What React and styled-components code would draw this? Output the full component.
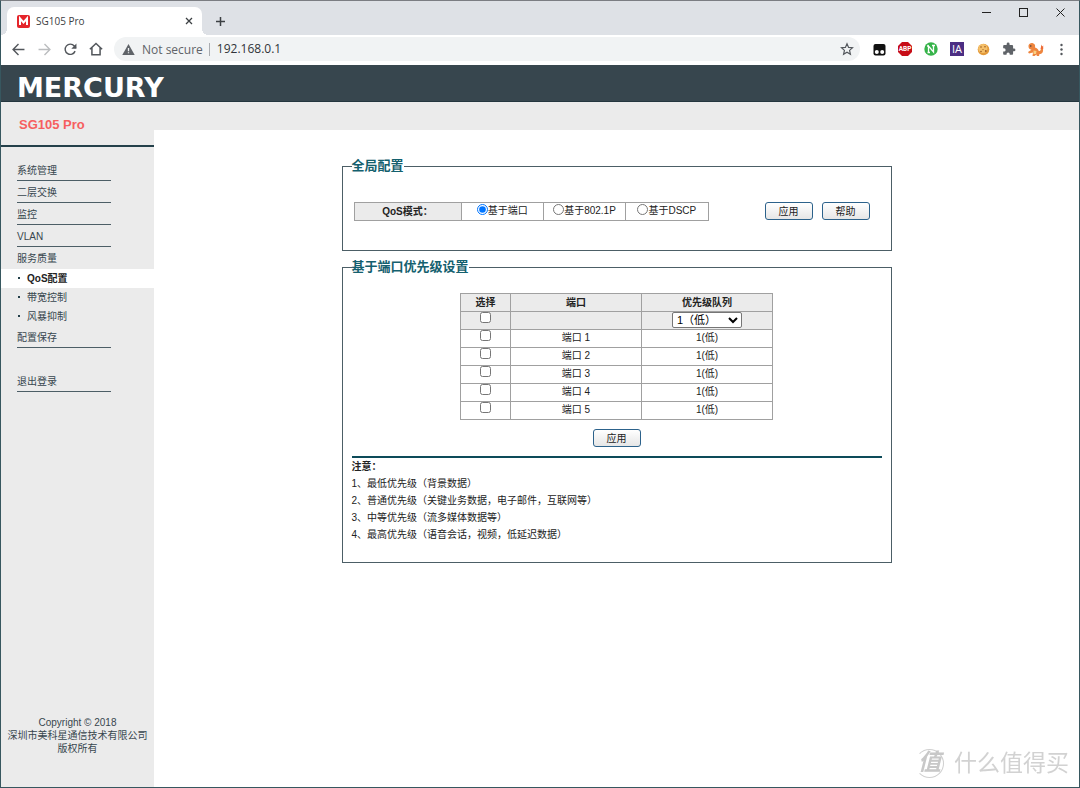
import React from "react";
import styled, { createGlobalStyle, css } from "styled-components";

const GlobalStyle = createGlobalStyle`
  * {
    box-sizing: border-box;
  }

  body {
    margin: 0;
    background: #fff;
    color: #222;
    font-family: "Liberation Sans", "Noto Sans CJK SC", sans-serif;
    font-size: 10px;
    line-height: 14px;
  }

  button,
  input,
  select {
    margin: 0;
    padding: 0;
    font: inherit;
    color: inherit;
  }
`;

/* ---------- browser window ---------- */

const Window = styled.div`
  display: flex;
  flex-direction: column;
  min-height: 100vh;
  border: 1px solid #37575f;
  border-top-color: #7b7d82;
`;

const TabStrip = styled.header`
  display: flex;
  align-items: flex-end;
  height: 34px;
  padding-left: 6px;
  background: #dee1e6;
  font-family: "Open Sans", sans-serif;
`;

const Tab = styled.div`
  position: relative;
  display: flex;
  align-items: center;
  width: 195px;
  height: 28px;
  padding: 0 8px 0 10px;
  border-radius: 7px 7px 0 0;
  background: #fff;
  color: #3c4043;

  & span {
    flex: 1;
    margin-left: 6px;
  }

  &::before,
  &::after {
    content: "";
    position: absolute;
    bottom: 0;
    width: 6px;
    height: 6px;
  }

  &::before {
    left: -6px;
    background: radial-gradient(circle at 0 0, transparent 6px, #fff 6px);
  }

  &::after {
    right: -6px;
    background: radial-gradient(circle at 100% 0, transparent 6px, #fff 6px);
  }
`;

const IconButton = styled.button`
  display: flex;
  align-items: center;
  justify-content: center;
  flex: none;
  width: ${({ $width }) => $width || 26}px;
  height: ${({ $height }) => $height || 26}px;
  border: 0;
  background: none;
`;

const NewTab = styled(IconButton)`
  margin-left: 5px;
`;

const WindowControls = styled.div`
  display: flex;
  align-self: flex-start;
  margin-left: auto;
`;

const Toolbar = styled.nav`
  display: flex;
  align-items: center;
  height: 30px;
  padding: 0 5px 2px 4px;
  background: #fff;
  font-family: "Open Sans", sans-serif;
  font-size: 12px;
`;

const AddressBar = styled.div`
  display: flex;
  flex: 1;
  align-items: center;
  height: 24px;
  margin: 0 6px 0 5px;
  padding: 0 0 0 8px;
  border-radius: 12px;
  background: #f1f3f4;
`;

const Security = styled.button`
  display: flex;
  align-items: center;
  gap: 7px;
  padding-right: 6px;
  border: 0;
  border-right: 1px solid #a9acb0;
  background: none;
  color: #5f6368;
  line-height: 13px;
`;

const Address = styled.input`
  flex: 1;
  min-width: 0;
  margin-left: 7px;
  border: 0;
  outline: 0;
  background: none;
  color: #303338;
`;

/* ---------- switch web page ---------- */

const Masthead = styled.header`
  display: flex;
  align-items: center;
  height: 37px;
  padding: 10px 0 0 16px;
  border-bottom: 1px solid #24363e;
  background: #37464e;
`;

const Logo = styled.h1`
  margin: 0;
  color: #fff;
  font: bold 27px/26px "DejaVu Sans", sans-serif;
`;

const Page = styled.div`
  display: flex;
  flex: 1;
`;

const Sidebar = styled.aside`
  display: flex;
  flex-direction: column;
  flex: none;
  width: 153px;
  background: #ebebeb;
  color: #37464e;
`;

const Model = styled.h2`
  margin: 0 0 12px;
  padding: 15px 0 12px 18px;
  border-bottom: 2px solid #24404a;
  color: #f65f5f;
  font-size: 13px;
  line-height: 16px;
`;

const Menu = styled.ul`
  margin: 0;
  padding: 0;
  list-style: none;
`;

const MenuLink = styled.a`
  display: block;
  width: 94px;
  margin-left: 16px;
  padding: 5px 0 2px;
  border-bottom: 1px solid ${({ $open }) => ($open ? "transparent" : "#4c5e66")};
  color: inherit;
  text-decoration: none;
`;

const LogoutItem = styled.li`
  margin-top: 22px;
`;

const SubLink = styled.a`
  display: flex;
  align-items: center;
  height: 19px;
  padding: 1px 0 0 16px;
  color: inherit;
  text-decoration: none;

  &::before {
    content: "";
    width: 2px;
    height: 2px;
    margin: 0 7px 3px 1px;
    background: #24404a;
  }

  ${({ $active }) =>
    $active &&
    css`
      background: #fff;
      color: #222;
      font-weight: bold;
    `}
`;

const Copyright = styled.p`
  margin: auto 0 32px;
  text-align: center;
  line-height: 13px;
`;

const Main = styled.main`
  flex: 1;
  padding-bottom: 20px;

  &::before {
    content: "";
    display: block;
    height: 28px;
    background: #ebebeb;
  }
`;

const Panels = styled.div`
  display: flex;
  flex-direction: column;
  gap: 7px;
  width: 550px;
  margin: 27px auto 0;
`;

const Panel = styled.fieldset`
  min-width: 0;
  margin: 0;
  padding: ${({ $padding }) => $padding};
  border: 1px solid #4c5e66;
`;

const Legend = styled.legend`
  padding: 0;
  color: #14606e;
  font-size: 13px;
  font-weight: bold;
  line-height: 18px;
`;

const ModeRow = styled.div`
  display: flex;
  align-items: flex-start;
  gap: 9px;
  padding: 0 12px 0 2px;
`;

const Table = styled.table`
  border-collapse: collapse;
  text-align: center;

  & th,
  & td {
    height: 18px;
    padding: 0;
    border: 1px solid #a0a0a0;
  }

  & th {
    background: #ebebeb;
  }
`;

const ModeTable = styled(Table)`
  table-layout: fixed;
  width: 355px;
  margin-right: auto;
`;

const PortTable = styled(Table)`
  table-layout: fixed;
  width: 313px;
  margin: 0 auto;

  & td {
    padding-bottom: 1px;
  }
`;

const BatchRow = styled.tr`
  background: #ebebeb;
`;

const Option = styled.label`
  display: inline-flex;
  align-items: center;

  & input {
    width: 11px;
    height: 11px;
    margin-bottom: 3px;
  }
`;

const Tick = styled.input`
  display: block;
  width: 11px;
  height: 11px;
  margin: 0 auto 5px;
`;

const Queue = styled.select`
  display: block;
  width: 70px;
  height: 16px;
  margin: 0 auto;
  border: 1px solid #767676;
  border-radius: 2px;
  background: #fff;
  color: #000;
  font-size: 11px;
`;

const Button = styled.button`
  width: 48px;
  height: 18px;
  padding-top: 2px;
  border: 1px solid #2c628b;
  border-radius: 3px;
  background: linear-gradient(#fff, #e6e6e6);
  color: #222;
  line-height: 14px;
`;

const Actions = styled.div`
  display: flex;
  justify-content: center;
  padding: 9px 0;
`;

const Notes = styled.section`
  border-top: 2px solid #0d4b59;
  line-height: 17px;

  & h3,
  & p {
    margin: 0;
    font-size: 10px;
  }
`;

const Watermark = styled.div`
  position: fixed;
  right: 11px;
  bottom: 8px;
  display: flex;
  align-items: center;
  gap: 10px;
  color: #d2d2d2;
  font-size: 23px;
  line-height: 34px;
`;

const Seal = styled.span`
  width: 29px;
  height: 29px;
  border: 1px solid #cfcfcf;
  border-left-color: transparent;
  border-radius: 50%;
  color: #c8c8c8;
  text-align: center;
  font-style: italic;
  font-weight: bold;
  line-height: 25px;
`;

/* ---------- icons ---------- */

const Icon = ({ size = 14, box = 24, children, ...rest }) => (
  <svg width={size} height={size} viewBox={`0 0 ${box} ${box}`} fill="none" aria-hidden="true" {...rest}>
    {children}
  </svg>
);

const stroke = { stroke: "#53575c", strokeWidth: 2.6 };

const Favicon = () => (
  <Icon size={13} box={13}>
    <rect width="13" height="13" rx="2" fill="#e5252b" />
    <path d="M3 10V3.5L6.5 7.5L10 3.5V10" stroke="#fff" strokeWidth="2" />
  </Icon>
);

const extensions = [
  {
    name: "Tampermonkey",
    icon: (
      <Icon size={13} box={13}>
        <rect x="0.5" y="1" width="12" height="11.5" rx="2" fill="#111" />
        <circle cx="3.8" cy="9" r="2" fill="#fff" />
        <circle cx="9.2" cy="9" r="2" fill="#fff" />
      </Icon>
    ),
  },
  {
    name: "Adblock Plus",
    icon: (
      <Icon size={14} box={14}>
        <path d="M4 0H10L14 4V10L10 14H4L0 10V4Z" fill="#c70d17" />
        <text x="7" y="9.4" textAnchor="middle" fontFamily="Roboto" fontSize="6.5" fontWeight="bold" fill="#fff">
          ABP
        </text>
      </Icon>
    ),
  },
  {
    name: "N",
    icon: (
      <Icon size={14} box={14}>
        <circle cx="7" cy="7" r="6.7" fill="#36b34a" />
        <path d="M4.5 10.5V4L9.5 10V3.5M3 4H5M8 3.5H11M3.5 10.5H6" stroke="#fff" strokeWidth="1.3" />
      </Icon>
    ),
  },
  {
    name: "IA",
    icon: (
      <Icon size={14} box={14}>
        <rect width="14" height="14" fill="#4b2e83" />
        <text x="7" y="11" textAnchor="middle" fontSize="11" fill="#fff">
          IA
        </text>
      </Icon>
    ),
  },
  {
    name: "Cookies",
    icon: (
      <Icon size={13} box={13}>
        <circle cx="6.5" cy="6.5" r="5.8" fill="#e39a3a" />
        <circle cx="5.8" cy="5.5" r="4.6" fill="#f5c06a" />
        <g fill="#9a5a24">
          <circle cx="4" cy="4" r="0.8" />
          <circle cx="8" cy="3.8" r="0.8" />
          <circle cx="6" cy="6.6" r="0.6" />
          <circle cx="4" cy="8.5" r="0.8" />
          <circle cx="8.8" cy="8" r="0.9" />
        </g>
      </Icon>
    ),
  },
  {
    name: "Extensions",
    icon: (
      <Icon size={14}>
        <path
          fill="#5f6368"
          d="M20.5 11H19V7c0-1.1-.9-2-2-2h-4V3.5a2.5 2.5 0 0 0-5 0V5H4c-1.1 0-2 .9-2 2v3.8h1.5a2.7 2.7 0 0 1 0 5.4H2V20c0 1.1.9 2 2 2h3.8v-1.5a2.7 2.7 0 0 1 5.4 0V22H17c1.1 0 2-.9 2-2v-4h1.5a2.5 2.5 0 0 0 0-5z"
        />
      </Icon>
    ),
  },
  {
    name: "Profile",
    icon: (
      <Icon size={17} box={17}>
        <path
          d="M1.5 4.5C2 2.5 4 1.6 6 2.2C8 2.8 8.4 4.5 8 6.5C10 7 11 8 11.6 9.8C13 10.5 14 9.5 13.8 7.5L16 8C16.5 11 15 13 12.5 13L12 15H9.8L9.5 13.5L7.5 15H5.5L6 11.5L2 12.5L1 11L4.5 8.8C2.5 8.5 1.2 7 1.5 4.5Z"
          fill="#ee853e"
        />
        <path d="M6.5 9.5L9.5 10L9 13L6.5 13Z" fill="#f8d083" />
        <path d="M13.6 8L14.4 3.6L15.2 5.4L16.2 4.4L16.2 8Z" fill="#ee6a35" />
        <circle cx="3.8" cy="5" r="0.7" fill="#27323a" />
      </Icon>
    ),
  },
];

/* ---------- data ---------- */

const menu = [
  { label: "系统管理" },
  { label: "二层交换" },
  { label: "监控" },
  { label: "VLAN" },
  { label: "服务质量", items: ["QoS配置", "带宽控制", "风暴抑制"] },
  { label: "配置保存" },
];

const modes = ["基于端口", "基于802.1P", "基于DSCP"];
const ports = [1, 2, 3, 4, 5];

const notes = [
  "1、最低优先级（背景数据）",
  "2、普通优先级（关键业务数据，电子邮件，互联网等）",
  "3、中等优先级（流多媒体数据等）",
  "4、最高优先级（语音会话，视频，低延迟数据）",
];

const BrowserChrome = () => (
  <>
    <TabStrip>
      <Tab>
        <Favicon />
        <span>SG105 Pro</span>
        <IconButton $width={10} $height={14} aria-label="Close tab">
          <Icon size={8} box={8}>
            <path d="M1 1L7 7M7 1L1 7" stroke="#3c4043" strokeWidth="1.3" />
          </Icon>
        </IconButton>
      </Tab>
      <NewTab $height={28} aria-label="New tab">
        <Icon size={11} box={11}>
          <path d="M5.5 1V10M1 5.5H10" stroke="#3c4043" strokeWidth="1.5" />
        </Icon>
      </NewTab>
      <WindowControls>
        <IconButton $width={37} $height={23} aria-label="Minimize">
          <Icon size={9} box={9}>
            <path d="M0 4.5H9" stroke="#222" />
          </Icon>
        </IconButton>
        <IconButton $width={37} $height={23} aria-label="Maximize">
          <Icon size={9} box={9}>
            <rect x="0.5" y="0.5" width="8" height="8" stroke="#222" />
          </Icon>
        </IconButton>
        <IconButton $width={37} $height={23} aria-label="Close">
          <Icon size={9} box={9}>
            <path d="M0.5 0.5L8.5 8.5M8.5 0.5L0.5 8.5" stroke="#222" />
          </Icon>
        </IconButton>
      </WindowControls>
    </TabStrip>
    <Toolbar>
      <IconButton aria-label="Back">
        <Icon size={13}>
          <path d="M23 12H3M12 2L2 12L12 22" {...stroke} />
        </Icon>
      </IconButton>
      <IconButton aria-label="Forward">
        <Icon size={13}>
          <path d="M1 12H21M12 2L22 12L12 22" {...stroke} stroke="#bbbdbf" />
        </Icon>
      </IconButton>
      <IconButton aria-label="Reload">
        <Icon size={13}>
          <path d="M20.5 15A9.5 9.5 0 1 1 19 5.5L22 9" {...stroke} />
          <path d="M23 1V10.5H13.5Z" fill="#53575c" />
        </Icon>
      </IconButton>
      <IconButton aria-label="Home">
        <Icon size={14}>
          <path d="M1.5 12.5L12 2.5L22.5 12.5M5 10V22H19V10" {...stroke} />
        </Icon>
      </IconButton>
      <AddressBar>
        <Security>
          <Icon size={13}>
            <path d="M12 2L23.5 22H0.5Z" fill="#5f6368" />
            <path d="M12 9V15M12 17V19" stroke="#f1f3f4" strokeWidth="2.4" />
          </Icon>
          Not secure
        </Security>
        <Address aria-label="Address" defaultValue="192.168.0.1" />
        <IconButton aria-label="Bookmark">
          <Icon size={14}>
            <path
              d="M12 3L14.7 9.2L21.5 9.9L16.4 14.4L17.9 21L12 17.5L6.1 21L7.6 14.4L2.5 9.9L9.3 9.2Z"
              {...stroke}
              strokeWidth="2"
            />
          </Icon>
        </IconButton>
      </AddressBar>
      {extensions.map(({ name, icon }) => (
        <IconButton key={name} aria-label={name}>
          {icon}
        </IconButton>
      ))}
      <IconButton aria-label="Menu">
        <Icon size={13} box={13}>
          <g fill="#53575c">
            <circle cx="6.5" cy="2" r="1.2" />
            <circle cx="6.5" cy="6.5" r="1.2" />
            <circle cx="6.5" cy="11" r="1.2" />
          </g>
        </Icon>
      </IconButton>
    </Toolbar>
  </>
);

const SideMenu = () => (
  <Sidebar>
    <Model>SG105 Pro</Model>
    <Menu>
      {menu.map(({ label, items }) => (
        <li key={label}>
          <MenuLink href="#" $open={!!items}>
            {label}
          </MenuLink>
          {items && (
            <Menu>
              {items.map((item, index) => (
                <li key={item}>
                  <SubLink href="#" $active={index === 0}>
                    {item}
                  </SubLink>
                </li>
              ))}
            </Menu>
          )}
        </li>
      ))}
      <LogoutItem>
        <MenuLink href="#">退出登录</MenuLink>
      </LogoutItem>
    </Menu>
    <Copyright>
      Copyright © 2018
      <br />
      深圳市美科星通信技术有限公司
      <br />
      版权所有
    </Copyright>
  </Sidebar>
);

const GlobalConfig = () => (
  <Panel $padding="27px 9px 29px">
    <Legend>全局配置</Legend>
    <ModeRow>
      <ModeTable>
        <colgroup>
          <col width="107" />
          <col />
          <col />
          <col />
        </colgroup>
        <tbody>
          <tr>
            <th>QoS模式：</th>
            {modes.map((mode, index) => (
              <td key={mode}>
                <Option>
                  <input type="radio" name="mode" defaultChecked={index === 0} />
                  {mode}
                </Option>
              </td>
            ))}
          </tr>
        </tbody>
      </ModeTable>
      <Button>应用</Button>
      <Button>帮助</Button>
    </ModeRow>
  </Panel>
);

const PortPriority = () => (
  <Panel $padding="17px 9px 19px">
    <Legend>基于端口优先级设置</Legend>
    <PortTable>
      <colgroup>
        <col width="50" />
        <col />
        <col />
      </colgroup>
      <thead>
        <tr>
          <th>选择</th>
          <th>端口</th>
          <th>优先级队列</th>
        </tr>
      </thead>
      <tbody>
        <BatchRow>
          <td>
            <Tick type="checkbox" aria-label="选择" />
          </td>
          <td />
          <td>
            <Queue aria-label="优先级队列">
              <option>1（低）</option>
            </Queue>
          </td>
        </BatchRow>
        {ports.map((port) => (
          <tr key={port}>
            <td>
              <Tick type="checkbox" aria-label={`端口 ${port}`} />
            </td>
            <td>端口 {port}</td>
            <td>1(低)</td>
          </tr>
        ))}
      </tbody>
    </PortTable>
    <Actions>
      <Button>应用</Button>
    </Actions>
    <Notes>
      <h3>注意：</h3>
      {notes.map((note) => (
        <p key={note}>{note}</p>
      ))}
    </Notes>
  </Panel>
);

const App = () => {
  return (
    <Window>
      <GlobalStyle />
      <BrowserChrome />
      <Masthead>
        <Logo>MERCURY</Logo>
      </Masthead>
      <Page>
        <SideMenu />
        <Main>
          <Panels>
            <GlobalConfig />
            <PortPriority />
          </Panels>
        </Main>
      </Page>
      <Watermark>
        <Seal>值</Seal>
        什么值得买
      </Watermark>
    </Window>
  );
};

export default App;
